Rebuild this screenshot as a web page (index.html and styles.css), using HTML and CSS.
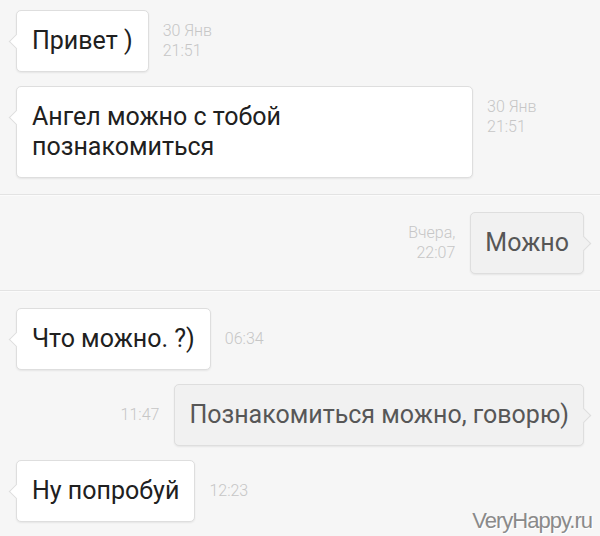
FILE: index.html
```html
<!DOCTYPE html>
<html lang="ru">
<head>
<meta charset="utf-8">
<title>Chat</title>
<link rel="stylesheet" href="styles.css">
</head>
<body>
<div class="chat">
  <section class="group first">
    <div class="row in">
      <div class="bubble">Привет )</div>
      <div class="meta"><span>30 Янв</span><span>21:51</span></div>
    </div>
    <div class="row in">
      <div class="bubble wide">Ангел можно с тобой<br>познакомиться</div>
      <div class="meta"><span>30 Янв</span><span>21:51</span></div>
    </div>
  </section>
  <section class="group">
    <div class="row out">
      <div class="meta"><span>Вчера,</span><span>22:07</span></div>
      <div class="bubble">Можно</div>
    </div>
  </section>
  <section class="group last">
    <div class="row in">
      <div class="bubble">Что можно. ?)</div>
      <div class="meta"><span>06:34</span></div>
    </div>
    <div class="row out">
      <div class="meta"><span>11:47</span></div>
      <div class="bubble">Познакомиться можно, говорю)</div>
    </div>
    <div class="row in">
      <div class="bubble">Ну попробуй</div>
      <div class="meta"><span>12:23</span></div>
    </div>
  </section>
</div>
<div class="watermark">VeryHappy.ru</div>
</body>
</html>
```
FILE: styles.css
```css
html, body {
  margin: 0;
  padding: 0;
  background: #f6f6f6;
}
body {
  width: 600px;
  height: 536px;
  overflow: hidden;
  position: relative;
  font-family: Roboto, "Noto Sans", "Liberation Sans", sans-serif;
}
.chat {
  display: flex;
  flex-direction: column;
}
.group {
  display: flex;
  flex-direction: column;
  gap: 14px;
  padding: 17px 16px 16px;
  border-bottom: 1px solid #e3e3e3;
  box-shadow: 0 1px 0 #fbfbfb;
}
.group.first {
  padding-top: 10px;
}
.group.last {
  border-bottom: none;
  box-shadow: none;
}
.row {
  display: flex;
  align-items: flex-start;
  gap: 14px;
}
.row.out {
  justify-content: flex-end;
  gap: 15px;
}
.bubble {
  position: relative;
  background: #ffffff;
  border: 1px solid #dedede;
  border-radius: 5px;
  box-shadow: 0 1px 2px rgba(0, 0, 0, 0.07);
  padding: 15px;
  font-size: 25px;
  line-height: 30px;
  color: #202020;
  white-space: nowrap;
}
.bubble.wide {
  width: 425px;
}
.in .bubble::before {
  content: "";
  position: absolute;
  left: -6px;
  top: 25px;
  width: 10px;
  height: 10px;
  background: #ffffff;
  border-left: 1px solid #dedede;
  border-bottom: 1px solid #dedede;
  transform: rotate(45deg);
}
.out .bubble {
  background: #f1f1f1;
  color: #575757;
  padding-left: 14px;
  padding-right: 14px;
}
.out .bubble::after {
  content: "";
  position: absolute;
  right: -6px;
  top: 25px;
  width: 10px;
  height: 10px;
  background: #f1f1f1;
  border-right: 1px solid #dedede;
  border-top: 1px solid #dedede;
  transform: rotate(45deg);
}
.meta {
  margin-top: 16px;
  height: 30px;
  display: flex;
  flex-direction: column;
  justify-content: center;
  font-size: 16px;
  line-height: 20px;
  font-weight: 300;
  color: #c6c6c6;
  white-space: nowrap;
}
.out .meta {
  align-items: flex-end;
}
.watermark {
  position: absolute;
  right: 8px;
  bottom: 2px;
  font-family: "Liberation Sans", Arial, sans-serif;
  font-size: 22px;
  line-height: 26px;
  letter-spacing: -1px;
  color: #8a8a8a;
  text-shadow: 1px 1px 0 #ffffff;
}
```
